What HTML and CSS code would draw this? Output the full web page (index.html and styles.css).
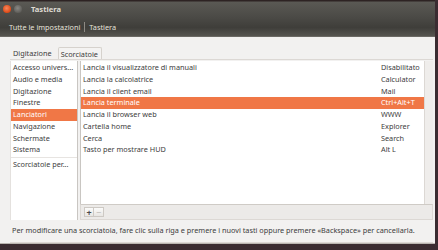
FILE: index.html
```html
<!DOCTYPE html>
<html lang="it">
<head>
  <meta charset="UTF-8">
  <title>Tastiera</title>
  <link rel="stylesheet" href="styles.css">
</head>
<body>
  <div class="window">
    <div class="titlebar">
      <span class="wbtn close"></span>
      <span class="wbtn min"></span>
      <span class="title">Tastiera</span>
    </div>
    <div class="toolbar">
      <span>Tutte le impostazioni</span>
      <span class="crumb-sep"></span>
      <span>Tastiera</span>
    </div>
    <div class="content">
      <div class="tabs">
        <span class="tab">Digitazione</span>
        <span class="tab active">Scorciatoie</span>
      </div>
      <div class="page">
        <ul class="categories">
          <li>Accesso univers...</li>
          <li>Audio e media</li>
          <li>Digitazione</li>
          <li>Finestre</li>
          <li class="selected">Lanciatori</li>
          <li>Navigazione</li>
          <li>Schermate</li>
          <li>Sistema</li>
          <li class="divider">Scorciatoie per...</li>
        </ul>
        <div class="shortcuts">
          <div class="list-wrap">
            <ul class="shortcut-list">
              <li><span>Lancia il visualizzatore di manuali</span><span class="accel">Disabilitato</span></li>
              <li><span>Lancia la calcolatrice</span><span class="accel">Calculator</span></li>
              <li><span>Lancia il client email</span><span class="accel">Mail</span></li>
              <li class="selected"><span>Lancia terminale</span><span class="accel">Ctrl+Alt+T</span></li>
              <li><span>Lancia il browser web</span><span class="accel">WWW</span></li>
              <li><span>Cartella home</span><span class="accel">Explorer</span></li>
              <li><span>Cerca</span><span class="accel">Search</span></li>
              <li><span>Tasto per mostrare HUD</span><span class="accel">Alt L</span></li>
            </ul>
            <div class="trough"></div>
          </div>
          <div class="list-toolbar">
            <span class="tool-btn">+</span>
            <span class="tool-btn off">&minus;</span>
          </div>
        </div>
      </div>
      <p class="hint">Per modificare una scorciatoia, fare clic sulla riga e premere i nuovi tasti oppure premere «Backspace» per cancellarla.</p>
    </div>
  </div>
</body>
</html>
```

FILE: styles.css
```css
:root {
  --bg: #f2f1f0;
  --text: #3c3c3c;
  --orange: #f07746;
  --border: #c9c6c2;
  --dark: #3c3b37;
}

* {
  box-sizing: border-box;
}

body {
  margin: 0;
  width: 438px;
  height: 250px;
  overflow: hidden;
  background: #3a2c31;
  font-family: "Noto Sans", sans-serif;
  font-size: 7.3px;
  color: var(--text);
}

.window {
  width: 435px;
  height: 244px;
  display: flex;
  flex-direction: column;
  background: var(--bg);
  border-bottom: 1px solid #b9b5b0;
}

/* title bar + unified toolbar */
.titlebar {
  height: 17px;
  display: flex;
  align-items: center;
  padding-left: 3px;
  gap: 3px;
  background: linear-gradient(#2d2323 0, #2d2323 1px, #5a5954 2px, #4b4a46 17px);
  color: #dfdbd2;
}

.wbtn {
  width: 8px;
  height: 8px;
  border-radius: 50%;
}

.wbtn.close {
  background: radial-gradient(circle at 45% 40%, #f7875e, #dd4814 70%);
}

.wbtn.min {
  background: radial-gradient(circle at 45% 40%, #8a8884, #5f5e5a 70%);
}

.title {
  margin-left: 6px;
  font-weight: bold;
  font-size: 7.6px;
}

.toolbar {
  height: 20px;
  display: flex;
  align-items: center;
  padding-left: 9px;
  gap: 3px;
  background: linear-gradient(#4b4a46, #3f3e3a 55%, #55544f);
  border-bottom: 1px solid #6b6964;
  color: #e6e2da;
}

.crumb-sep {
  width: 1px;
  height: 10px;
  background: #8d8a84;
  margin: 0 1px;
}

.content {
  flex: 1;
  display: flex;
  flex-direction: column;
  padding: 10px 2px 0 10px;
}

.tabs {
  display: flex;
  height: 12px;
  align-items: stretch;
  padding-left: 2px;
  gap: 3px;
}

.tab {
  display: flex;
  align-items: center;
  padding: 0 3px 0 1px;
}

.tab.active {
  border: 1px solid #d6d2cd;
  border-bottom: none;
  border-radius: 2px 2px 0 0;
  background: #f4f3f2;
  padding: 0 3px 0 2px;
}

.page {
  display: flex;
  gap: 2px;
  height: 161px;
  border-top: 1px solid #dcd8d4;
  padding-top: 1px;
}

ul {
  list-style: none;
  margin: 0;
  padding: 0;
}

.categories {
  width: 68px;
  background: #fff;
  border-left: 1px solid #e4e1de;
  border-right: 1px solid var(--border);
  padding-top: 1px;
}

.categories li,
.shortcut-list li {
  height: 11.75px;
  line-height: 11.75px;
  white-space: nowrap;
  overflow: hidden;
}

.categories li {
  padding-left: 2px;
}

.categories li.divider {
  border-top: 1px solid #e7e4e1;
  margin-top: 1px;
  height: 13px;
  line-height: 13px;
}

li.selected {
  background: var(--orange);
  color: #fff;
}

.shortcuts {
  flex: 1;
  display: flex;
  flex-direction: column;
}

.list-wrap {
  height: 143px;
  display: flex;
  border-left: 1px solid var(--border);
}

.shortcut-list {
  flex: 1;
  background: #fff;
  border-right: 1px solid #dcd8d4;
  padding-top: 1px;
}

.shortcut-list li {
  display: flex;
  padding-left: 2px;
}

.shortcut-list li span:first-child {
  width: 298px;
}

.trough {
  width: 8px;
  background: #efedeb;
}

.list-toolbar {
  height: 16px;
  display: flex;
  align-items: center;
  padding-left: 3px;
  background: #eceae8;
  border: 1px solid #dcd8d4;
  border-top-color: #cfcbc6;
}

.tool-btn {
  width: 10px;
  height: 10px;
  display: flex;
  align-items: center;
  justify-content: center;
  font-size: 9px;
  font-weight: bold;
  color: #4a4a4a;
  background: linear-gradient(#fbfbfa, #e8e6e3);
  border: 1px solid #cdc9c4;
}

.tool-btn.off {
  color: #b9b6b2;
  font-weight: normal;
  border-left: none;
}

.hint {
  margin: 0;
  flex: 1;
  display: flex;
  align-items: center;
  padding-left: 2px;
  padding-bottom: 2px;
  border-bottom: 1px solid #dcd8d4;
  white-space: nowrap;
}
```
